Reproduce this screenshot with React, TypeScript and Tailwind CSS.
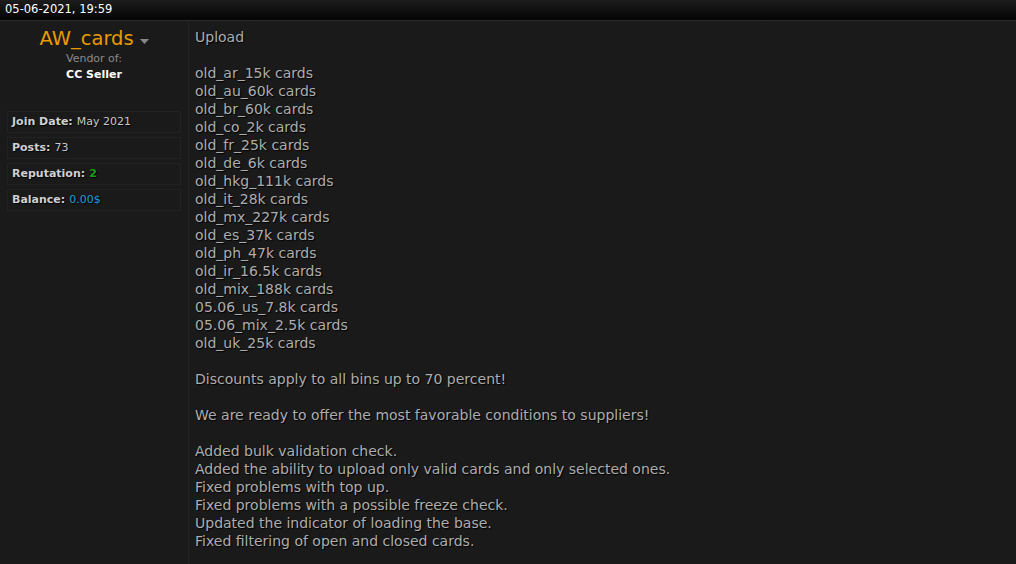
const LINES = [
  'old_ar_15k cards',
  'old_au_60k cards',
  'old_br_60k cards',
  'old_co_2k cards',
  'old_fr_25k cards',
  'old_de_6k cards',
  'old_hkg_111k cards',
  'old_it_28k cards',
  'old_mx_227k cards',
  'old_es_37k cards',
  'old_ph_47k cards',
  'old_ir_16.5k cards',
  'old_mix_188k cards',
  '05.06_us_7.8k cards',
  '05.06_mix_2.5k cards',
  'old_uk_25k cards',
];

const CHANGES = [
  'Added bulk validation check.',
  'Added the ability to upload only valid cards and only selected ones.',
  'Fixed problems with top up.',
  'Fixed problems with a possible freeze check.',
  'Updated the indicator of loading the base.',
  'Fixed filtering of open and closed cards.',
];

function InfoRow({ label, children }: { label: string; children: React.ReactNode }) {
  return (
    <div className="h-[22px] border border-[#222222] px-[4px] flex items-center text-[11px] text-[#c8c8c8] [text-shadow:1px_1px_1px_#000]">
      <span className="font-bold text-[#d0d0d0]">{label}:</span>
      <span className="ml-[4px]">{children}</span>
    </div>
  );
}

export default function App() {
  return (
    <div className="w-[1016px] h-[564px] overflow-hidden bg-[#1a1a1a] font-['DejaVu_Sans',sans-serif]">
      {/* Post header */}
      <div className="h-[21px] bg-gradient-to-b from-[#1d1d1d] to-[#050505] border-b border-[#2c2c2c] flex items-center px-[5px]">
        <span className="text-[11.5px] text-white">05-06-2021, 19:59</span>
      </div>

      <div className="flex h-full">
        {/* User sidebar */}
        <div className="w-[189px] shrink-0 border-r border-[#232323] pt-[6px] px-[7px]">
          <div className="flex flex-col items-center">
            <div className="flex items-center gap-[6px]">
              <span className="text-[19.5px] leading-[24px] text-[#e89a00]">AW_cards</span>
              <svg width="9" height="5" viewBox="0 0 9 5" className="mt-[4px]">
                <path d="M0 0 L9 0 L4.5 5 Z" fill="#888888" />
              </svg>
            </div>
            <span className="text-[11px] leading-[14px] mt-[1px] text-[#8a8a8a]">Vendor of:</span>
            <span className="text-[11px] leading-[16px] mt-[1px] font-bold text-white">CC Seller</span>
          </div>

          <div className="mt-[28px] flex flex-col gap-[4px]">
            <InfoRow label="Join Date">May 2021</InfoRow>
            <InfoRow label="Posts">73</InfoRow>
            <InfoRow label="Reputation">
              <span className="font-bold text-[#14a114]">2</span>
            </InfoRow>
            <InfoRow label="Balance">
              <span className="text-[#1a9fd6]">0.00$</span>
            </InfoRow>
          </div>
        </div>

        {/* Post body */}
        <div className="flex-1 px-[6px] pt-[7px] text-[14px] leading-[18px] text-[#adadad] [text-shadow:1px_1px_1px_#000]">
          <div>Upload</div>
          <div className="h-[18px]" />
          {LINES.map((l) => (
            <div key={l}>{l}</div>
          ))}
          <div className="h-[18px]" />
          <div>Discounts apply to all bins up to 70 percent!</div>
          <div className="h-[18px]" />
          <div>We are ready to offer the most favorable conditions to suppliers!</div>
          <div className="h-[18px]" />
          {CHANGES.map((l) => (
            <div key={l}>{l}</div>
          ))}
        </div>
      </div>
    </div>
  );
}
